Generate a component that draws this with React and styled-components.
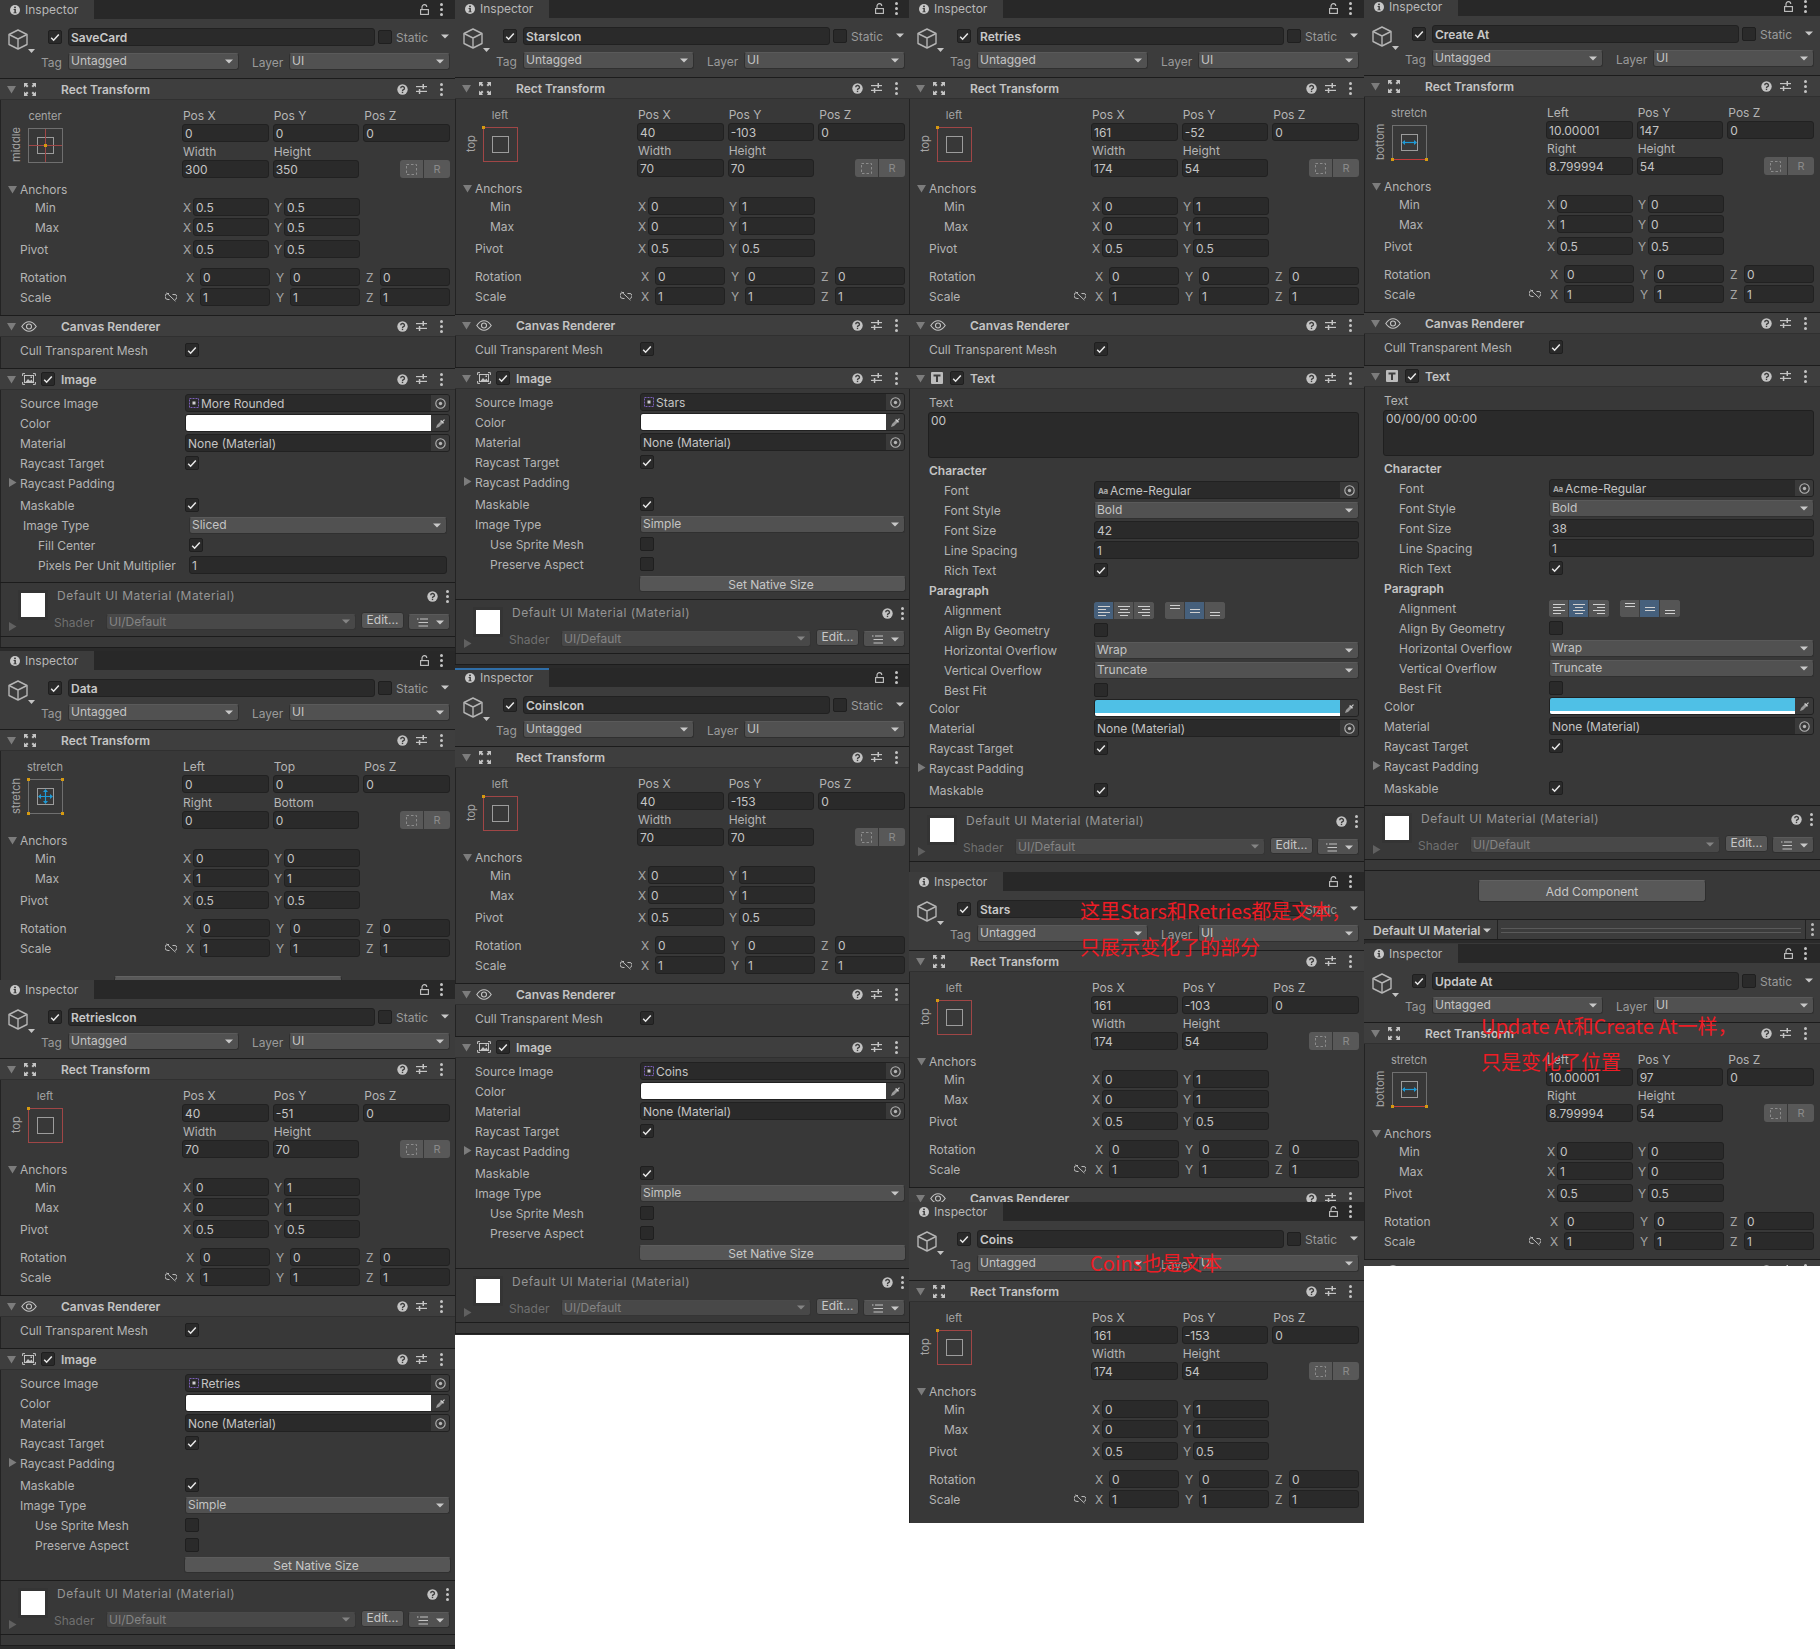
import React from 'react';
import styled, { createGlobalStyle } from 'styled-components';

const GlobalStyle = createGlobalStyle`
  html, body { margin: 0; padding: 0; background: #fff; }
  body { font-family: Inter, "Noto Sans", sans-serif; font-size: 12px; color: #bdbdbd; }
  * { box-sizing: border-box; }
`;

const Page = styled.div`display:flex;align-items:flex-start;width:1820px;height:1649px;overflow:hidden;background:#fff;`;
const Column = styled.div`flex:none;display:flex;flex-direction:column;width:${p=>p.$w}px;margin-top:${p=>p.$top}px;`;
const Panel = styled.section`position:relative;flex:none;height:${p=>p.$h}px;overflow:hidden;background:#383838;`;
const Inner = styled.div`width:456px;box-shadow:inset 1px 0 0 #232323;min-height:100%;`;

const TabBar = styled.div`display:flex;align-items:center;height:19px;background:#282828;`;
const Tab = styled.div`display:flex;align-items:center;gap:5px;width:94px;height:19px;padding-left:10px;background:#3c3c3c;color:#b8b8b8;box-shadow:${p=>p.$focus?'inset 0 2px 0 #2f6ea8':'none'};`;
const TabTools = styled.div`display:flex;align-items:center;margin-left:auto;margin-right:13px;gap:11px;`;

const Toolbar = styled.div`height:59px;padding-top:9px;background:#3c3c3c;`;
const ToolRow = styled.div`display:flex;height:18px;padding-left:8px;`;
const CubeBox = styled.div`flex:none;width:40px;height:26px;margin-top:1px;`;
const NameField = styled.div`flex:none;width:307px;height:18px;margin:0 3px 0 6px;padding-left:2px;line-height:17px;background:#2a2a2a;border:1px solid #212121;border-radius:3px;font-weight:600;color:#c8c8c8;`;
const StaticLabel = styled.span`width:45px;margin-left:4px;line-height:19px;color:#9a9a9a;`;
const TagRow = styled.div`display:flex;align-items:flex-start;margin-top:7px;padding-left:41px;`;
const TagLabel = styled.span`flex:none;width:${p=>p.$w}px;margin-left:${p=>p.$ml||0}px;line-height:19px;color:#9a9a9a;`;

const Box = styled.div`flex:none;position:relative;width:14px;height:14px;margin-top:${p=>p.$mt??2}px;background:#2a2a2a;border:1px solid #1f1f1f;border-radius:2px;display:flex;align-items:center;justify-content:center;`;

const Field = styled.div`flex:1;min-width:0;height:18px;padding-left:2px;line-height:18px;background:#2a2a2a;border:1px solid #212121;border-radius:3px;color:#c4c4c4;white-space:nowrap;overflow:hidden;`;
const Drop = styled.div`flex:${p=>p.$w?'none':'1'};display:flex;align-items:center;justify-content:space-between;width:${p=>p.$w?p.$w+'px':'auto'};height:${p=>p.$h||17}px;padding:0 5px 1px 2px;margin-top:${p=>p.$mt||0}px;background:${p=>p.$dim?'#484848':'#515151'};border:1px solid ${p=>p.$dim?'#353535':'#303030'};border-top-color:${p=>p.$dim?'#4a4a4a':'#5a5a5a'};border-radius:3px;color:${p=>p.$dim?'#848484':'#c4c4c4'};line-height:14px;`;

const Section = styled.div`border-top:1px solid #1c1c1c;`;
const Header = styled.div`display:grid;grid-template-columns:21px 20px 20px 1fr auto;align-items:center;height:21px;background:#3e3e3e;border-bottom:1px solid #303030;`;
const HeaderTitle = styled.span`font-weight:600;color:#c4c4c4;`;
const HeaderTools = styled.div`display:flex;align-items:center;padding-right:13px;`;
const HeaderIcon = styled.span`display:flex;`;
const Fold = styled.span`display:flex;padding-left:7px;`;

const RectBody = styled.div`padding:8px 0 7px;`;
const RectTop = styled.div`display:grid;grid-template-columns:182px 268px;height:70px;`;
const AnchorCol = styled.div`padding-left:10px;`;
const AnchorTop = styled.div`width:50px;margin-left:10px;line-height:16px;height:16px;text-align:center;font-size:11px;color:#a6a6a6;`;
const AnchorRow = styled.div`display:flex;margin-top:2px;`;
const AnchorSide = styled.div`width:12px;height:38px;margin-right:4px;writing-mode:vertical-rl;transform:rotate(180deg);text-align:center;line-height:12px;font-size:11px;color:#a6a6a6;`;
const TriGrid = styled.div`display:grid;grid-template-columns:repeat(3,1fr);grid-template-rows:16px 18px 18px 18px;column-gap:4px;`;
const TriLabel = styled.div`padding-left:1px;line-height:${p=>p.$lh||16}px;padding-top:${p=>p.$pt||0}px;color:#b4b4b4;white-space:nowrap;`;
const FieldCell = styled.div`display:flex;min-width:0;`;
const Blueprint = styled.div`display:flex;justify-content:flex-end;`;
const BlueBtn = styled.div`display:flex;align-items:center;justify-content:center;width:${p=>p.$w}px;height:18px;background:#585858;border-right:${p=>p.$sep?'1px solid #383838':'none'};border-radius:${p=>p.$sep?'3px 0 0 3px':'0 3px 3px 0'};font-size:11px;color:#8a8a8a;`;

const Row = styled.div`display:grid;grid-template-columns:${p=>p.$col||185}px ${p=>450-(p.$col||185)}px;height:20px;margin-top:${p=>p.$mt||0}px;`;
const Label = styled.div`display:flex;align-items:flex-start;padding-left:${p=>p.$x||20}px;line-height:20px;white-space:nowrap;color:${p=>p.$bold?'#c4c4c4':'#b4b4b4'};font-weight:${p=>p.$bold?600:400};`;
const AnchorsLabel = styled(Label)`padding-top:2px;`;
const FoldAbs = styled.span`position:absolute;left:8px;top:${p=>p.$y||4}px;display:flex;`;
const RowLabelWrap = styled.div`position:relative;`;
const Value = styled.div`display:flex;min-width:0;height:18px;padding:0 ${p=>p.$inset?3:0}px 0 ${p=>p.$inset?4:0}px;`;
const Vec2 = styled.div`display:grid;grid-template-columns:87px 87px;column-gap:4px;`;
const Vec3 = styled.div`display:grid;grid-template-columns:repeat(3,88px);column-gap:2px;`;
const Cell = styled.div`display:flex;min-width:0;height:18px;`;
const Letter = styled.span`flex:none;width:${p=>p.$wide?18:11}px;padding-left:${p=>p.$wide?4:1}px;line-height:19px;color:#a6a6a6;`;
const LinkBox = styled.span`display:flex;margin:4px 5px 0 auto;`;

const ObjField = styled.div`flex:1;display:flex;height:18px;background:#2a2a2a;border:1px solid #212121;border-radius:3px;overflow:hidden;`;
const ObjText = styled.div`flex:1;display:flex;align-items:center;gap:2px;padding:1px 0 0 ${p=>p.$pl||2}px;line-height:16px;color:#c4c4c4;white-space:nowrap;`;
const ObjCap = styled.div`flex:none;display:flex;align-items:center;justify-content:center;width:18px;background:#3a3a3a;`;
const Swatch = styled.div`flex:1;background:${p=>p.$c};border-bottom:${p=>p.$line?'3px solid #fff':'none'};`;
const AaMark = styled.span`width:10px;font-size:8px;font-weight:700;color:#a8a8a8;letter-spacing:-.4px;`;

const CullBody = styled.div`padding:4px 0 7px;`;
const ImageBody = styled.div`padding:4px 0 ${p=>p.$pb}px;`;
const BtnRow = styled.div`padding:1px 5px 0 184px;`;
const Btn = styled.div`height:16px;padding-right:3px;line-height:15px;text-align:center;background:#565656;border-radius:3px;border:1px solid #303030;border-top-color:#5c5c5c;color:#c8c8c8;`;

const TextLabelRow = styled.div`height:19px;padding-left:20px;line-height:19px;color:#b4b4b4;`;
const TextArea = styled.div`width:431px;height:46px;margin-left:19px;padding:0 2px;line-height:16px;background:#2a2a2a;border:1px solid #1f1f1f;border-radius:3px;color:#c4c4c4;`;
const AlignGroups = styled.div`display:flex;gap:11px;padding:1px 0 0 0;`;
const AlignGroup = styled.div`display:flex;height:17px;border-radius:3px;overflow:hidden;background:#585858;`;
const AlignBtn = styled.div`display:flex;align-items:center;justify-content:center;width:20px;background:${p=>p.$on?'#46607c':'#555'};border-right:1px solid #3d3d3d;&:last-child{border-right:0;}`;

const Material = styled.div`display:grid;grid-template-columns:54px 1fr;height:55px;border-top:1px solid #1c1c1c;border-bottom:1px solid #1c1c1c;`;
const MatLeft = styled.div`padding:10px 0 0 21px;`;
const Thumb = styled.div`width:24px;height:24px;background:#fff;box-shadow:0 0 0 3px #343434;`;
const MatFold = styled.span`display:flex;margin:5px 0 0 -13px;`;
const MatName = styled.div`display:flex;align-items:center;height:18px;margin-top:4px;padding-left:3px;line-height:18px;letter-spacing:.5px;color:#959595;`;
const MatTools = styled.div`display:flex;align-items:center;gap:8px;margin-left:auto;padding-right:7px;`;
const ShaderRow = styled.div`display:flex;align-items:flex-start;margin-top:7px;`;
const ShaderLabel = styled.span`flex:none;width:52px;margin-top:2px;line-height:18px;color:#707070;`;
const EditBtn = styled.div`flex:none;width:43px;height:17px;margin-left:5px;text-align:center;line-height:14px;background:#565656;border:1px solid #303030;border-radius:3px;color:#c8c8c8;`;
const ListBtn = styled(Drop)`margin-left:4px;padding:0 5px 0 8px;`;

const Divider = styled.div`height:11px;border-bottom:1px solid #1c1c1c;`;
const DarkStrip = styled.div`height:3px;background:#2a2a2a;`;
const AddWrap = styled.div`padding:${p=>p.$pt}px 0 17px 114px;`;
const AddBtn = styled.div`width:228px;height:22px;line-height:21px;text-align:center;background:#585858;border:1px solid #2e2e2e;border-top-color:#626262;border-radius:3px;color:#c8c8c8;`;
const MatBar = styled.div`display:flex;height:21px;border-top:1px solid #1c1c1c;border-bottom:1px solid #1c1c1c;padding-left:5px;background:#3c3c3c;`;
const MatBarTab = styled.div`display:flex;align-items:center;gap:3px;width:129px;padding:1px 0 0 4px;border-right:1px solid #232323;font-weight:600;color:#c4c4c4;white-space:nowrap;`;
const MatBarLines = styled.div`width:300px;height:5px;margin:8px 0 0 3px;border-top:1px solid #5a5a5a;border-bottom:1px solid #5a5a5a;`;
const MatBarEnd = styled.div`display:flex;align-items:center;padding-left:5px;margin-left:4px;border-left:1px solid #232323;`;

const Note = styled.div`position:absolute;left:${p=>p.$x}px;top:${p=>p.$y}px;z-index:3;font-family:"Noto Sans CJK SC","Noto Sans",sans-serif;font-size:20px;line-height:20px;font-weight:400;color:#ee1c25;white-space:nowrap;`;

/* ---- drawings ---- */
const Tri = ({ d = 'down', s = 9, c = '#7c7c7c' }) => (
  <svg width={s} height={s} viewBox="0 0 9 9" style={{ display: 'block', flex: 'none' }}>
    {d === 'down' ? <path d="M0 1h9L4.500 8.500z" fill={c} /> : <path d="M1 0l7.500 4.500L1 9z" fill={c} />}
  </svg>
);
const Arrow = ({ c = '#c8c8c8' }) => (
  <svg width="8" height="5" viewBox="0 0 8 5" style={{ display: 'block', flex: 'none' }}><path d="M0 .5h8L4 4.500z" fill={c} /></svg>
);
const Check = () => (
  <svg width="10" height="9" viewBox="0 0 10 9"><path d="M1.200 4.800l2.400 2.400L8.800 1.400" fill="none" stroke="#e8e8e8" strokeWidth="1.500" /></svg>
);
const Kebab = ({ c = '#c4c4c4' }) => (
  <svg width="3" height="13" viewBox="0 0 3 13" style={{ display: 'block', flex: 'none' }}><circle cx="1.500" cy="1.500" r="1.500" fill={c} /><circle cx="1.500" cy="6.500" r="1.500" fill={c} /><circle cx="1.500" cy="11.500" r="1.500" fill={c} /></svg>
);
const Info = () => (
  <svg width="10" height="10" viewBox="0 0 10 10" style={{ flex: 'none' }}><circle cx="5" cy="5" r="5" fill="#c8c8c8" /><rect x="4.100" y="1.600" width="1.800" height="1.600" fill="#3c3c3c" /><path d="M3.600 4h2.300v3.400h.8v.9H3.400v-.9h1V4.900h-.8z" fill="#3c3c3c" /></svg>
);
const Lock = () => (
  <svg width="9" height="11" viewBox="0 0 9 11" style={{ display: 'block' }}><path d="M2 5V3a2.400 2.400 0 0 1 4.800 0" fill="none" stroke="#c4c4c4" strokeWidth="1.100" /><rect x=".6" y="5.600" width="7.800" height="4.800" fill="none" stroke="#c4c4c4" strokeWidth="1.100" /></svg>
);
const Cube = () => (
  <svg width="30" height="26" viewBox="0 0 30 26" style={{ display: 'block' }}>
    <g fill="none" stroke="#b4b4b4" strokeWidth="1.400" strokeLinejoin="round">
      <path d="M10 1l9 4.500v10L10 20l-9-4.500v-10z" /><path d="M1 5.500l9 4.500 9-4.500M10 10v10" />
    </g>
    <path d="M20 20h7l-3.500 4z" fill="#c4c4c4" />
  </svg>
);
const Help = () => (
  <svg width="11" height="11" viewBox="0 0 11 11" style={{ display: 'block', flex: 'none' }}><circle cx="5.500" cy="5.500" r="5.200" fill="#c4c4c4" /><path d="M3.700 4.200a1.900 1.700 0 1 1 2.800 1.500c-.7.4-1 .7-1 1.300" fill="none" stroke="#3e3e3e" strokeWidth="1.400" /><rect x="4.800" y="7.700" width="1.400" height="1.400" fill="#3e3e3e" /></svg>
);
const Sliders = () => (
  <svg width="11" height="10" viewBox="0 0 11 10" style={{ display: 'block', flex: 'none' }}><g fill="#c4c4c4"><rect y="2" width="11" height="1.200" /><rect y="6.800" width="11" height="1.200" /><rect x="6.500" y="0" width="1.500" height="5" /><rect x="2.800" y="5" width="1.500" height="5" /></g></svg>
);
const RectIcon = () => (
  <svg width="14" height="13" viewBox="0 0 14 13" style={{ display: 'block', marginLeft: 2 }}>
    <g fill="#c4c4c4"><path d="M1 0h4L4 1.500l1.500 1.500L4 4.500 2.500 3 1 4.500z" /><path d="M13 0H9l1 1.500L8.500 3 10 4.500 11.500 3 13 4.500z" /><path d="M1 13h4L4 11.500l1.500-1.500L4 8.500 2.500 10 1 8.500z" /><path d="M13 13H9l1-1.500L8.500 10 10 8.500l1.500 1.500L13 8.500z" /></g>
  </svg>
);
const Eye = () => (
  <svg width="16" height="11" viewBox="0 0 16 11" style={{ display: 'block' }}><path d="M.8 5.500C3 2.300 5.300.8 8 .8s5 1.500 7.200 4.700C13 8.700 10.700 10.200 8 10.200S3 8.700.8 5.500z" fill="none" stroke="#c4c4c4" strokeWidth="1.100" /><circle cx="8" cy="5.500" r="2.500" fill="none" stroke="#c4c4c4" strokeWidth="1.100" /></svg>
);
const ImgIcon = () => (
  <svg width="14" height="12" viewBox="0 0 14 12" style={{ display: 'block', marginLeft: 1 }}><path d="M.6 3V.6H3M11 .6h2.400V3M.6 9v2.400H3M11 11.400h2.400V9" fill="none" stroke="#c4c4c4" /><rect x="2.500" y="2.500" width="9" height="7" fill="none" stroke="#c4c4c4" /><path d="M3.500 9l2.500-3 2 2 1.500-1.500L11 9z" fill="#c4c4c4" /><rect x="8.500" y="3.500" width="1.500" height="1.500" fill="#c4c4c4" /></svg>
);
const TIcon = () => (
  <svg width="12" height="12" viewBox="0 0 12 12" style={{ display: 'block', marginLeft: 1 }}><rect width="12" height="12" rx="1" fill="#bcbcbc" /><path d="M2.500 2.500h7v2H7V10H5V4.500H2.500z" fill="#3e3e3e" /></svg>
);
const Target = () => (
  <svg width="11" height="11" viewBox="0 0 11 11" style={{ display: 'block' }}><circle cx="5.500" cy="5.500" r="4.700" fill="none" stroke="#b4b4b4" strokeWidth="1.100" /><circle cx="5.500" cy="5.500" r="1.700" fill="#b4b4b4" /></svg>
);
const Dropper = () => (
  <svg width="11" height="11" viewBox="0 0 11 11" style={{ display: 'block' }}><path d="M1 10l1-3 4-4 2 2-4 4z" fill="#9a9a9a" /><path d="M6 2l1.500 1L9 1.200 10 2 8.200 3.500 9 5 8 5.800 5.200 3z" fill="#c8c8c8" /></svg>
);
const ListIcon = () => (
  <svg width="11" height="9" viewBox="0 0 11 9" style={{ display: 'block' }}><g fill="#c4c4c4"><rect x="0" y=".5" width="1.500" height="1" /><rect x="3" y=".5" width="8" height="1" /><rect x="1.500" y="4" width="1.500" height="1" /><rect x="3" y="4" width="8" height="1" /><rect x="1.500" y="7.500" width="1.500" height="1" /><rect x="3" y="7.500" width="8" height="1" /></g></svg>
);
const LinkOff = () => (
  <svg width="12" height="10" viewBox="0 0 12 10" style={{ display: 'block' }}><g fill="none" stroke="#bcbcbc" strokeWidth="1"><path d="M4 1.500H3a2.500 2.500 0 0 0 0 6h1.500M7.500 2.500H9a2.500 2.500 0 0 1 1 5" /><path d="M1.500 .8L10.500 9.200" /></g></svg>
);
const Sprite = () => (
  <svg width="10" height="10" viewBox="0 0 10 10" style={{ display: 'block', flex: 'none', marginTop: -1 }}><rect x=".5" y=".5" width="9" height="9" fill="none" stroke="#7a5fb8" strokeDasharray="2 1" /><rect x="3.500" y="3.500" width="3" height="3" fill="#d0d0d0" /></svg>
);
const Dashed = () => (
  <svg width="11" height="11" viewBox="0 0 11 11" style={{ display: 'block' }}><rect x=".5" y=".5" width="10" height="10" fill="none" stroke="#8c8c8c" strokeDasharray="2.500 2" /></svg>
);
const AlignIcon = ({ k }) => {
  const lines = { l: [[0, 12], [0, 8], [0, 12], [0, 8]], c: [[0, 12], [2, 8], [0, 12], [2, 8]], r: [[0, 12], [4, 8], [0, 12], [4, 8]] }[k];
  return (
    <svg width="12" height="11" viewBox="0 0 12 11" style={{ display: 'block' }}>
      {lines.map(([x, w], i) => <rect key={i} x={x} y={1 + i * 3} width={w} height="1" fill="#d0d0d0" />)}
    </svg>
  );
};
const VAlignIcon = ({ k }) => {
  const y = { t: 1, m: 5, b: 8 }[k];
  return (
    <svg width="12" height="13" viewBox="0 0 12 13" style={{ display: 'block' }}>
      <rect x="1" y={y} width="10" height="1" fill="#d0d0d0" /><rect x="1" y={y + 3} width="10" height="1" fill="#d0d0d0" />
    </svg>
  );
};
const AnchorBox = ({ v }) => {
  const grey = '#6f6f6f', red = '#a04646', org = '#d69a10', blue = '#1e9ad6';
  const Dot = ({ x, y }) => <rect x={x - 1.500} y={y - 1.500} width="3" height="3" fill={org} />;
  return (
    <svg width="38" height="38" viewBox="0 0 38 38" style={{ display: 'block', flex: 'none' }}>
      <rect x="2.500" y="2.500" width="34" height="34" fill="none" stroke={v === 'lt' ? red : grey} />
      <rect x="11.500" y="11.500" width="16" height="16" fill="none" stroke="#9c9c9c" />
      {v === 'cm' && <>
        <path d="M19.500 3v33M3 19.500h33" stroke={red} />
        <Dot x={19.500} y={19.500} />
      </>}
      {v === 'lt' && <Dot x={2.500} y={2.500} />}
      {v === 'ss' && <>
        <Dot x={2.500} y={2.500} /><Dot x={36.500} y={2.500} /><Dot x={2.500} y={36.500} /><Dot x={36.500} y={36.500} />
        <path d="M13 19.500h13M19.500 13v13" stroke={blue} strokeWidth="1.200" />
        <path d="M12 19.500l3-2.500v5zM27 19.500l-3-2.500v5zM19.500 12l-2.500 3h5zM19.500 27l-2.500-3h5z" fill={blue} />
      </>}
      {v === 'bs' && <>
        <path d="M2.500 36.500h34" stroke="#c23c3c" />
        <Dot x={2.500} y={36.500} /><Dot x={36.500} y={36.500} />
        <path d="M13 19.500h13" stroke={blue} strokeWidth="1.200" />
        <path d="M12 19.500l3-2.500v5zM27 19.500l-3-2.500v5z" fill={blue} />
      </>}
    </svg>
  );
};

/* ---- parts ---- */
const CheckBox = ({ on = true, mt }) => <Box $mt={mt}>{on && <Check />}</Box>;

const ObjectHead = ({ name, focus }) => (
  <>
    <TabBar>
      <Tab $focus={focus}><Info /><span>Inspector</span></Tab>
      <TabTools><Lock /><Kebab /></TabTools>
    </TabBar>
    <Toolbar>
      <ToolRow>
        <CubeBox><Cube /></CubeBox>
        <CheckBox />
        <NameField>{name}</NameField>
        <CheckBox on={false} />
        <StaticLabel>Static</StaticLabel>
        <span style={{ marginTop: 6 }}><Arrow /></span>
      </ToolRow>
      <TagRow>
        <TagLabel $w={27}>Tag</TagLabel>
        <Drop $w={171}>Untagged<Arrow /></Drop>
        <TagLabel $w={37} $ml={13}>Layer</TagLabel>
        <Drop $w={161}>UI<Arrow /></Drop>
      </TagRow>
    </Toolbar>
  </>
);

const SectionHead = ({ icon, check, title }) => (
  <Header>
    <Fold><Tri /></Fold>
    <HeaderIcon>{icon}</HeaderIcon>
    <span>{check && <CheckBox mt={0} />}</span>
    <HeaderTitle>{title}</HeaderTitle>
    <HeaderTools>
      <span style={{ marginRight: 8 }}><Help /></span>
      <span style={{ marginRight: 13 }}><Sliders /></span>
      <Kebab />
    </HeaderTools>
  </Header>
);

const V2 = ({ a, b }) => (
  <Vec2>
    <Cell><Letter>X</Letter><Field>{a}</Field></Cell>
    <Cell><Letter>Y</Letter><Field>{b}</Field></Cell>
  </Vec2>
);
const V3 = ({ v }) => (
  <Vec3>
    <Cell><Letter $wide>X</Letter><Field>{v}</Field></Cell>
    <Cell><Letter $wide>Y</Letter><Field>{v}</Field></Cell>
    <Cell><Letter $wide>Z</Letter><Field>{v}</Field></Cell>
  </Vec3>
);

const RectSection = ({ r }) => (
  <Section>
    <SectionHead icon={<RectIcon />} title="Rect Transform" />
    <RectBody>
      <RectTop>
        <AnchorCol>
          <AnchorTop>{r.top}</AnchorTop>
          <AnchorRow>
            <AnchorSide>{r.side}</AnchorSide>
            <AnchorBox v={r.box} />
          </AnchorRow>
        </AnchorCol>
        <TriGrid>
          {r.names.slice(0, 3).map((n) => <TriLabel key={n}>{n}</TriLabel>)}
          {r.pos.map((v, i) => <FieldCell key={i}><Field>{v}</Field></FieldCell>)}
          <TriLabel $lh={17} $pt={1}>{r.names[3]}</TriLabel>
          <TriLabel $lh={17} $pt={1}>{r.names[4]}</TriLabel>
          <span />
          {r.size.map((v, i) => <FieldCell key={i}><Field>{v}</Field></FieldCell>)}
          <Blueprint>
            <BlueBtn $w={24} $sep><Dashed /></BlueBtn>
            <BlueBtn $w={26}>R</BlueBtn>
          </Blueprint>
        </TriGrid>
      </RectTop>
      <Row $col={182}>
        <RowLabelWrap>
          <FoldAbs $y={7}><Tri /></FoldAbs>
          <AnchorsLabel>Anchors</AnchorsLabel>
        </RowLabelWrap>
      </Row>
      <Row $col={182}><Label $x={35}>Min</Label><V2 a={r.min[0]} b={r.min[1]} /></Row>
      <Row $col={182}><Label $x={35}>Max</Label><V2 a={r.max[0]} b={r.max[1]} /></Row>
      <Row $col={182} $mt={2}><Label>Pivot</Label><V2 a="0.5" b="0.5" /></Row>
      <Row $col={182} $mt={8}><Label>Rotation</Label><V3 v="0" /></Row>
      <Row $col={182}>
        <Label>Scale<LinkBox><LinkOff /></LinkBox></Label>
        <V3 v="1" />
      </Row>
    </RectBody>
  </Section>
);

const CanvasSection = () => (
  <Section>
    <SectionHead icon={<Eye />} title="Canvas Renderer" />
    <CullBody>
      <Row><Label>Cull Transparent Mesh</Label><Value><CheckBox /></Value></Row>
    </CullBody>
  </Section>
);

const ObjectRow = ({ label, icon, text, pl, x }) => (
  <Row>
    <Label $x={x}>{label}</Label>
    <Value>
      <ObjField>
        <ObjText $pl={pl}>{icon}{text}</ObjText>
        <ObjCap><Target /></ObjCap>
      </ObjField>
    </Value>
  </Row>
);
const ColorRow = ({ c, line, mt }) => (
  <Row $mt={mt}>
    <Label>Color</Label>
    <Value>
      <ObjField>
        <Swatch $c={c} $line={line} />
        <ObjCap><Dropper /></ObjCap>
      </ObjField>
    </Value>
  </Row>
);
const CheckRow = ({ label, x, on, mt }) => (
  <Row $mt={mt}><Label $x={x}>{label}</Label><Value><CheckBox on={on} /></Value></Row>
);
const PaddingRow = () => (
  <Row>
    <RowLabelWrap>
      <FoldAbs $y={4}><Tri d="right" /></FoldAbs>
      <Label>Raycast Padding</Label>
    </RowLabelWrap>
  </Row>
);

const ImageSection = ({ source, sliced }) => (
  <Section>
    <SectionHead icon={<ImgIcon />} check title="Image" />
    <ImageBody $pb={sliced ? 6 : 7}>
      <ObjectRow label="Source Image" icon={<Sprite />} text={source} pl={3} />
      <ColorRow c="#fff" />
      <ObjectRow label="Material" text="None (Material)" />
      <CheckRow label="Raycast Target" />
      <PaddingRow />
      <CheckRow label="Maskable" mt={2} />
      <Row>
        <Label $x={sliced ? 23 : 20}>Image Type</Label>
        <Value $inset={sliced}><Drop $mt={1}>{sliced ? 'Sliced' : 'Simple'}<Arrow /></Drop></Value>
      </Row>
      {sliced ? (
        <>
          <Row><Label $x={38}>Fill Center</Label><Value $inset><CheckBox /></Value></Row>
          <Row><Label $x={38}>Pixels Per Unit Multiplier</Label><Value $inset><Field>1</Field></Value></Row>
        </>
      ) : (
        <>
          <CheckRow label="Use Sprite Mesh" x={35} on={false} />
          <CheckRow label="Preserve Aspect" x={35} on={false} />
          <BtnRow><Btn>Set Native Size</Btn></BtnRow>
        </>
      )}
    </ImageBody>
  </Section>
);

const TextSection = ({ text, size, hAlign }) => (
  <Section>
    <SectionHead icon={<TIcon />} check title="Text" />
    <ImageBody $pb={6}>
      <TextLabelRow>Text</TextLabelRow>
      <TextArea>{text}</TextArea>
      <Row $mt={3}><Label $bold>Character</Label></Row>
      <ObjectRow label="Font" x={35} icon={<AaMark>Aa</AaMark>} text="Acme-Regular" pl={3} />
      <Row><Label $x={35}>Font Style</Label><Value><Drop $mt={1}>Bold<Arrow /></Drop></Value></Row>
      <Row><Label $x={35}>Font Size</Label><Value><Field>{size}</Field></Value></Row>
      <Row><Label $x={35}>Line Spacing</Label><Value><Field>1</Field></Value></Row>
      <CheckRow label="Rich Text" x={35} />
      <Row><Label $bold>Paragraph</Label></Row>
      <Row>
        <Label $x={35}>Alignment</Label>
        <AlignGroups>
          <AlignGroup>
            {['l', 'c', 'r'].map((k) => <AlignBtn key={k} $on={k === hAlign}><AlignIcon k={k} /></AlignBtn>)}
          </AlignGroup>
          <AlignGroup>
            {['t', 'm', 'b'].map((k) => <AlignBtn key={k} $on={k === 'm'}><VAlignIcon k={k} /></AlignBtn>)}
          </AlignGroup>
        </AlignGroups>
      </Row>
      <CheckRow label="Align By Geometry" x={35} on={false} />
      <Row><Label $x={35}>Horizontal Overflow</Label><Value><Drop $mt={1}>Wrap<Arrow /></Drop></Value></Row>
      <Row><Label $x={35}>Vertical Overflow</Label><Value><Drop $mt={1}>Truncate<Arrow /></Drop></Value></Row>
      <CheckRow label="Best Fit" x={35} on={false} />
      <ColorRow c="#4fc0e6" line mt={-2} />
      <ObjectRow label="Material" text="None (Material)" />
      <CheckRow label="Raycast Target" />
      <PaddingRow />
      <CheckRow label="Maskable" mt={2} />
    </ImageBody>
  </Section>
);

const MaterialSection = () => (
  <Material>
    <MatLeft>
      <Thumb />
      <MatFold><Tri d="right" c="#606060" /></MatFold>
    </MatLeft>
    <div>
      <MatName>
        Default UI Material (Material)
        <MatTools><Help /><Kebab /></MatTools>
      </MatName>
      <ShaderRow>
        <ShaderLabel>Shader</ShaderLabel>
        <Drop $w={250} $h={16} $mt={2} $dim>UI/Default<Arrow c="#848484" /></Drop>
        <EditBtn>Edit...</EditBtn>
        <ListBtn $w={42} $h={16} $mt={2}><ListIcon /><Arrow /></ListBtn>
      </ShaderRow>
    </div>
  </Material>
);

const leftTop = (pos, size) => ({ box: 'lt', top: 'left', side: 'top', names: ['Pos X', 'Pos Y', 'Pos Z', 'Width', 'Height'], pos, size, min: ['0', '1'], max: ['0', '1'] });
const bottomStretch = (y) => ({ box: 'bs', top: 'stretch', side: 'bottom', names: ['Left', 'Pos Y', 'Pos Z', 'Right', 'Height'], pos: ['10.00001', y, '0'], size: ['8.799994', '54'], min: ['0', '0'], max: ['1', '0'] });

const Insp = ({ h, name, focus, rect, children }) => (
  <Panel $h={h}>
    <Inner>
      <ObjectHead name={name} focus={focus} />
      <RectSection r={rect} />
      {children}
    </Inner>
  </Panel>
);

const ImageInspector = ({ h, name, rect, source, sliced, focus }) => (
  <Insp h={h} name={name} rect={rect} focus={focus}>
    <CanvasSection />
    <ImageSection source={source} sliced={sliced} />
    <MaterialSection />
    <Divider />
    <DarkStrip />
  </Insp>
);

export default function App() {
  return (
    <>
      <GlobalStyle />
      <Page>
        <Column $w={455} $top={0}>
          <ImageInspector h={651} name="SaveCard" source="More Rounded" sliced
            rect={{ box: 'cm', top: 'center', side: 'middle', names: ['Pos X', 'Pos Y', 'Pos Z', 'Width', 'Height'], pos: ['0', '0', '0'], size: ['300', '350'], min: ['0.5', '0.5'], max: ['0.5', '0.5'] }} />
          <Insp h={329} name="Data"
            rect={{ box: 'ss', top: 'stretch', side: 'stretch', names: ['Left', 'Top', 'Pos Z', 'Right', 'Bottom'], pos: ['0', '0', '0'], size: ['0', '0'], min: ['0', '0'], max: ['1', '1'] }}>
            <AddWrap $pt={10}><AddBtn>Add Component</AddBtn></AddWrap>
          </Insp>
          <ImageInspector h={669} name="RetriesIcon" source="Retries" rect={leftTop(['40', '-51', '0'], ['70', '70'])} />
        </Column>
        <Column $w={454} $top={-1}>
          <ImageInspector h={669} name="StarsIcon" source="Stars" rect={leftTop(['40', '-103', '0'], ['70', '70'])} />
          <ImageInspector h={667} name="CoinsIcon" source="Coins" focus rect={leftTop(['40', '-153', '0'], ['70', '70'])} />
        </Column>
        <Column $w={455} $top={-1}>
          <Insp h={873} name="Retries" rect={leftTop(['161', '-52', '0'], ['174', '54'])}>
            <CanvasSection />
            <TextSection text="00" size="42" hAlign="l" />
            <MaterialSection />
            <Divider />
          </Insp>
          <Panel $h={330}>
            <Inner>
              <ObjectHead name="Stars" />
              <RectSection r={leftTop(['161', '-103', '0'], ['174', '54'])} />
              <CanvasSection />
            </Inner>
            <Note $x={171} $y={29}>这里Stars和Retries都是文本，</Note>
            <Note $x={171} $y={65}>只展示变化了的部分</Note>
          </Panel>
          <Panel $h={321}>
            <Inner>
              <ObjectHead name="Coins" />
              <RectSection r={leftTop(['161', '-153', '0'], ['174', '54'])} />
            </Inner>
            <Note $x={181} $y={51}>Coins也是文本</Note>
          </Panel>
        </Column>
        <Column $w={456} $top={-3}>
          <Insp h={947} name="Create At" rect={bottomStretch('147')}>
            <CanvasSection />
            <TextSection text="00/00/00 00:00" size="38" hAlign="c" />
            <MaterialSection />
            <Divider />
            <AddWrap $pt={9}><AddBtn>Add Component</AddBtn></AddWrap>
            <MatBar>
              <MatBarTab>Default UI Material<Arrow /></MatBarTab>
              <MatBarLines />
              <MatBarEnd><Kebab c="#bcbcbc" /></MatBarEnd>
            </MatBar>
            <DarkStrip />
          </Insp>
          <Panel $h={322}>
            <Inner>
              <ObjectHead name="Update At" />
              <RectSection r={bottomStretch('97')} />
              <CanvasSection />
            </Inner>
            <Note $x={117} $y={72}>Update At和Create At一样，</Note>
            <Note $x={117} $y={108}>只是变化了位置</Note>
          </Panel>
        </Column>
      </Page>
    </>
  );
}
